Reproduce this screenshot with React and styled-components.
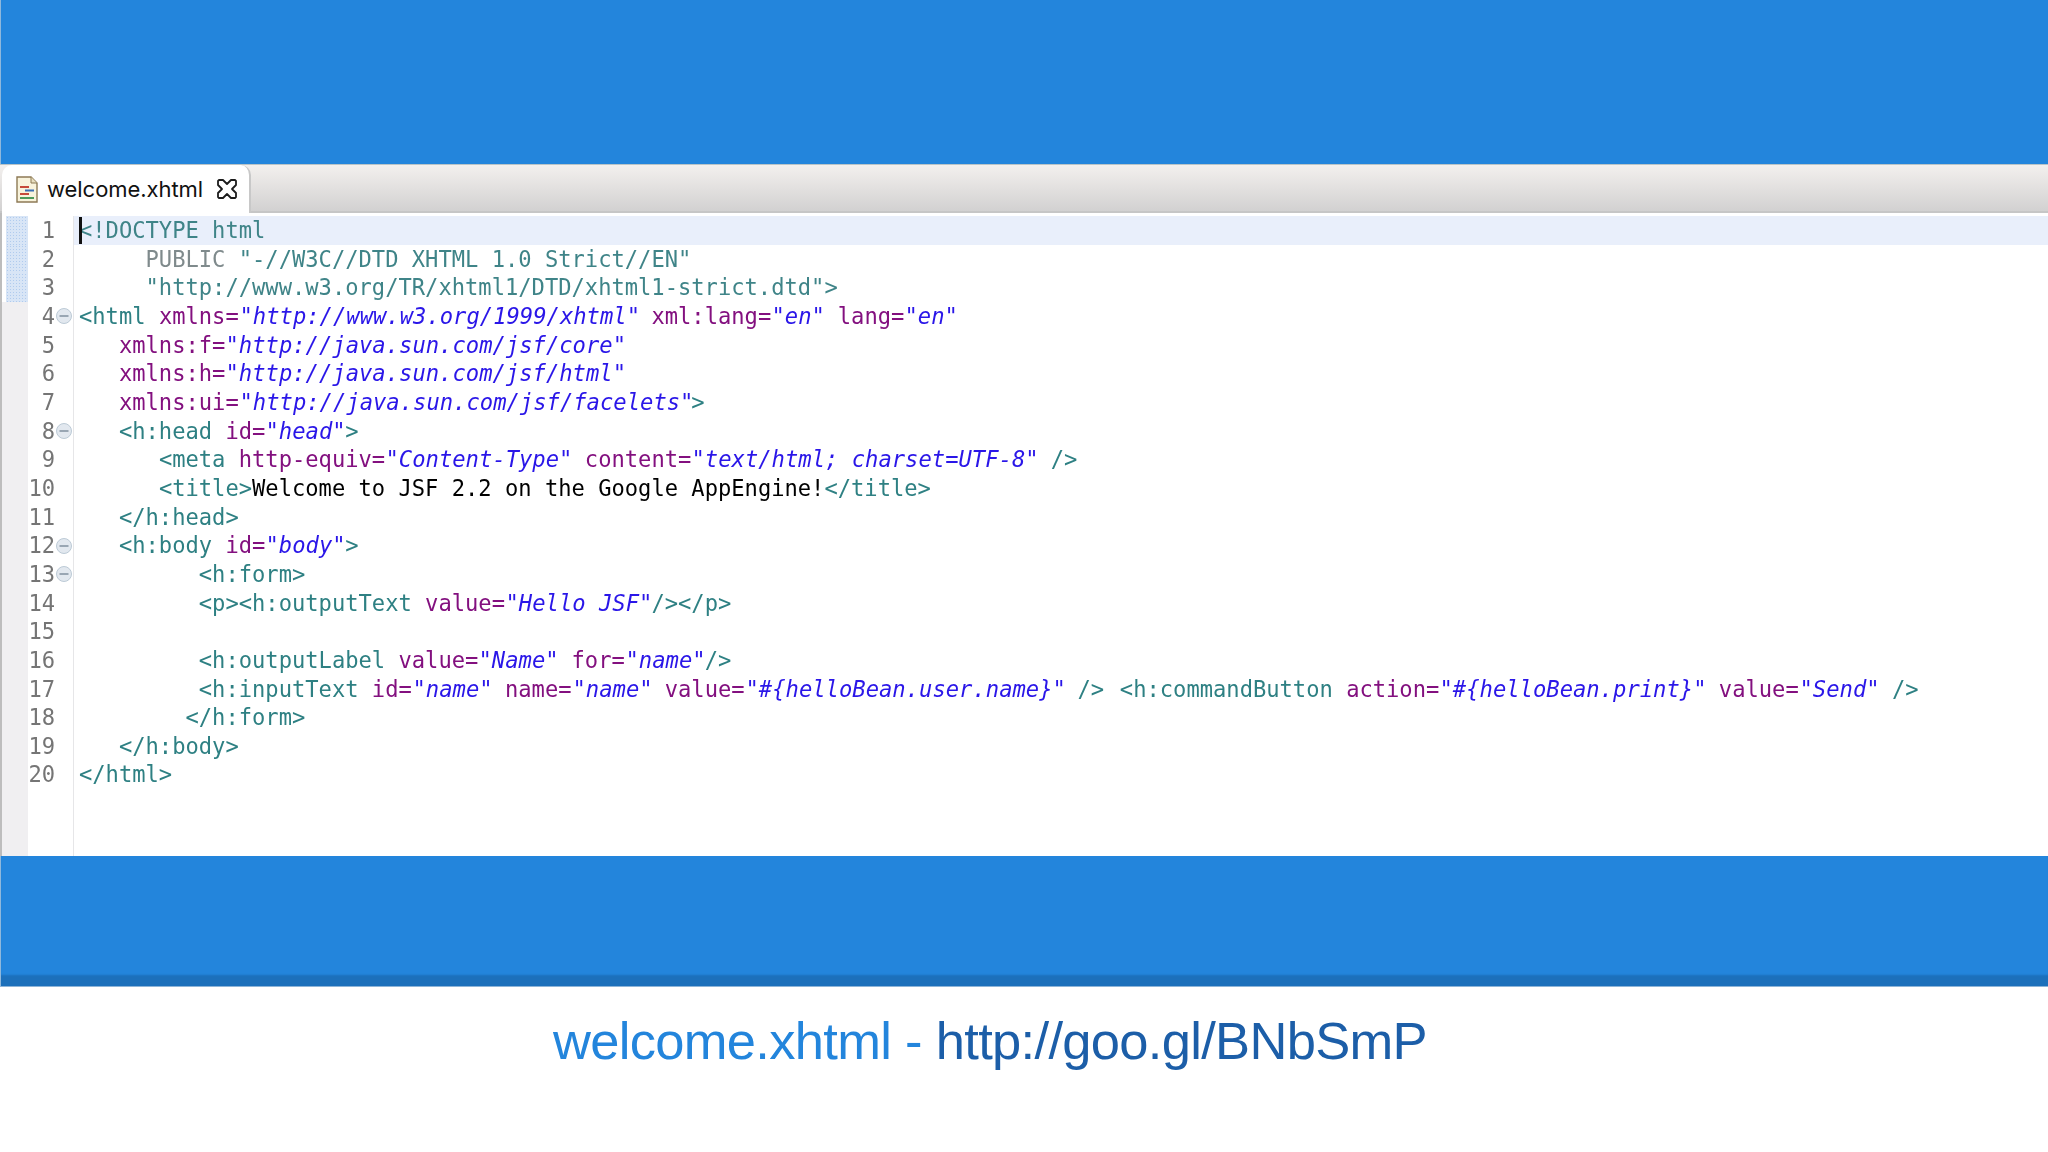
import React from "react";
import styled, { createGlobalStyle } from "styled-components";

const Global = createGlobalStyle`
  html, body { margin: 0; padding: 0; background: #fff; }
  #root { width: 2048px; height: 1152px; overflow: hidden; }
`;
const Page = styled.div`
  width: 2048px; height: 1152px; display: flex; flex-direction: column; background: #fff;
`;
const TopBand = styled.div`
  height: 164px; background: #2385dc; border-left: 1px solid #8fb8dc; box-sizing: border-box;
`;
const BottomBand = styled.div`
  height: 131px; background: #2385dc;
  border-left: 1px solid #8fb8dc;
  border-bottom: 1px solid #8db4d8;
  box-shadow: inset 0 -12px 2px -1px #1c70bb;
  box-sizing: border-box;
`;
const TabBar = styled.div`
  height: 49px; display: flex; align-items: flex-end; padding-left: 2px;
  background: linear-gradient(#f3f0ee, #d2d1d1);
  border-top: 1px solid #b9c4c8; border-bottom: 2px solid #c6c6c6; box-sizing: border-box;
`;
const Tab = styled.div`
  width: 249px; height: 48px; box-sizing: border-box; background: #fff;
  border-radius: 10px 10px 0 0; border-right: 2px solid #c8c8c8;
  display: flex; align-items: center; padding-left: 14px; margin-bottom: -2px;
  font: 22px "Inter", "Liberation Sans", sans-serif; letter-spacing: -0.05px; color: #111;
`;
const TabLabel = styled.span` margin-left: 9px; margin-right: 13px; `;
const Editor = styled.div`
  height: 643px; display: flex; flex-direction: column; background: #fff;
  border-left: 2px solid #bdbdbd; padding-top: 3px; box-sizing: border-box;
  font: 22.12px/28.66px "DejaVu Sans Mono", monospace; filter: blur(0.45px);
`;
const Row = styled.div`
  display: flex; height: ${p => p.$filler ? "auto" : "28.66px"}; flex: ${p => p.$filler ? 1 : "none"};
`;
const Marker = styled.div`
  width: 26px; flex: none; box-sizing: border-box;
  background-color: #f0eff1;
  ${p => p.$on && `
    border-left: 4px solid #fff;
    background-color: #d8e5f6;
    background-image: radial-gradient(#b0cbee 40%, transparent 45%);
    background-size: 3px 3px;
  `}
`;
const Num = styled.div`
  width: 27px; flex: none; text-align: right; color: #757575; white-space: pre;
`;
const Fold = styled.div`
  width: 18px; flex: none; display: flex; align-items: center; justify-content: center;
  border-right: 1px solid #e6e6e8;
`;
const Code = styled.div`
  position: relative; flex: 1; padding-left: 5px; white-space: pre; color: #000;
  background: ${p => p.$current ? "#e9effb" : "transparent"};
`;
const Caret = styled.span`
  position: absolute; left: 5px; top: 1px; width: 3px; height: 27px; background: #111;
`;
const Tag = styled.span` color: #2e8083; `;
const Attr = styled.span` color: #83107f; `;
const Str = styled.span`
  display: inline-block; color: #2a16e8; font-style: italic;
  transform: translateX(0.5px) scaleX(1.003); transform-origin: left center;
`;
const Doc = styled.span` color: #3f8488; `;
const Keyword = styled.span` color: #7f8a8c; `;
const Nudge = styled.span` margin-left: 2.5px; `;
const Caption = styled.div`
  flex: 1; display: flex; padding: 22px 0 0 553px;
  font: 52.5px/1.2 "Liberation Sans", Arial, sans-serif; letter-spacing: -0.69px; color: #1c5ea8;
`;
const Light = styled.span` color: #2385dc; white-space: pre; `;

const FoldIcon = () => (
  <svg width="18" height="18" viewBox="0 0 18 18">
    <circle cx="9" cy="9" r="7.5" fill="#e2e8ef" stroke="#bccad6" />
    <rect x="4.5" y="8.2" width="9" height="1.6" fill="#8796a5" />
  </svg>
);
const FileIcon = () => (
  <svg width="22" height="27" viewBox="0 0 22 27">
    <path d="M1 1h14l6 6v19H1z" fill="#f8f3dc" stroke="#8d7a55" strokeWidth="1.4" />
    <path d="M15 1v6h6" fill="#e8dfc0" stroke="#8d7a55" />
    <rect x="4" y="10" width="9" height="2" fill="#c64a3a" />
    <rect x="9" y="13.5" width="9" height="2" fill="#3b6fb5" />
    <rect x="4" y="17" width="9" height="2" fill="#c64a3a" />
    <rect x="4" y="21" width="14" height="2" fill="#4d9a5b" />
  </svg>
);
const CloseIcon = () => (
  <svg width="22" height="22" viewBox="0 0 22 22">
    <path d="M3 2h4l4 4 4-4h4l1 1v4l-4 4 4 4v4l-1 1h-4l-4-4-4 4H3l-1-1v-4l4-4-4-4V3z" fill="#fff" stroke="#1c1c1c" strokeWidth="1.8" strokeLinejoin="round" />
  </svg>
);

const T = p => <Tag {...p} />, A = p => <Attr {...p} />, S = p => <Str {...p} />;
const lines = [
  { c: <Doc>{"<!DOCTYPE html"}</Doc>, m: 1, current: 1 },
  { c: <>{"     "}<Keyword>PUBLIC</Keyword> <Doc>{'"-//W3C//DTD XHTML 1.0 Strict//EN"'}</Doc></>, m: 1 },
  { c: <Doc>{'     "http://www.w3.org/TR/xhtml1/DTD/xhtml1-strict.dtd">'}</Doc>, m: 1 },
  { c: <><T>{"<html "}</T><A>xmlns=</A><S>"http://www.w3.org/1999/xhtml"</S> <A>xml:lang=</A><S>"en"</S> <A>lang=</A><S>"en"</S></>, f: 1 },
  { c: <>{"   "}<A>xmlns:f=</A><S>"http://java.sun.com/jsf/core"</S></> },
  { c: <>{"   "}<A>xmlns:h=</A><S>"http://java.sun.com/jsf/html"</S></> },
  { c: <>{"   "}<A>xmlns:ui=</A><S>"http://java.sun.com/jsf/facelets"</S><T>{">"}</T></> },
  { c: <>{"   "}<T>{"<h:head "}</T><A>id=</A><S>"head"</S><T>{">"}</T></>, f: 1 },
  { c: <>{"      "}<T>{"<meta "}</T><A>http-equiv=</A><S>"Content-Type"</S> <A>content=</A><S>"text/html; charset=UTF-8"</S> <T>{"/>"}</T></> },
  { c: <>{"      "}<T>{"<title>"}</T>Welcome to JSF 2.2 on the Google AppEngine!<T>{"</title>"}</T></> },
  { c: <>{"   "}<T>{"</h:head>"}</T></> },
  { c: <>{"   "}<T>{"<h:body "}</T><A>id=</A><S>"body"</S><T>{">"}</T></>, f: 1 },
  { c: <>{"         "}<T>{"<h:form>"}</T></>, f: 1 },
  { c: <>{"         "}<T>{"<p><h:outputText "}</T><A>value=</A><S>"Hello JSF"</S><T>{"/></p>"}</T></> },
  { c: null },
  { c: <>{"         "}<T>{"<h:outputLabel "}</T><A>value=</A><S>"Name"</S> <A>for=</A><S>"name"</S><T>{"/>"}</T></> },
  { c: <>{"         "}<T>{"<h:inputText "}</T><A>id=</A><S>"name"</S> <A>name=</A><S>"name"</S> <A>value=</A><S>{'"#{helloBean.user.name}"'}</S> <T>{"/> "}</T><Nudge><T>{"<h:commandButton "}</T></Nudge><A>action=</A><S>{'"#{helloBean.print}"'}</S> <A>value=</A><S>"Send"</S> <T>{"/>"}</T></> },
  { c: <>{"        "}<T>{"</h:form>"}</T></> },
  { c: <>{"   "}<T>{"</h:body>"}</T></> },
  { c: <T>{"</html>"}</T> },
];

export default function App() {
  return (
    <Page>
      <Global />
      <TopBand />
      <TabBar>
        <Tab><FileIcon /><TabLabel>welcome.xhtml</TabLabel><CloseIcon /></Tab>
      </TabBar>
      <Editor>
        {lines.map((l, i) => (
          <Row key={i}>
            <Marker $on={l.m} />
            <Num>{i + 1}</Num>
            <Fold>{l.f && <FoldIcon />}</Fold>
            <Code $current={l.current}>{l.current && <Caret />}{l.c}</Code>
          </Row>
        ))}
        <Row $filler><Marker /><Num /><Fold /><Code /></Row>
      </Editor>
      <BottomBand />
      <Caption><Light>welcome.xhtml - </Light>http://goo.gl/BNbSmP</Caption>
    </Page>
  );
}
